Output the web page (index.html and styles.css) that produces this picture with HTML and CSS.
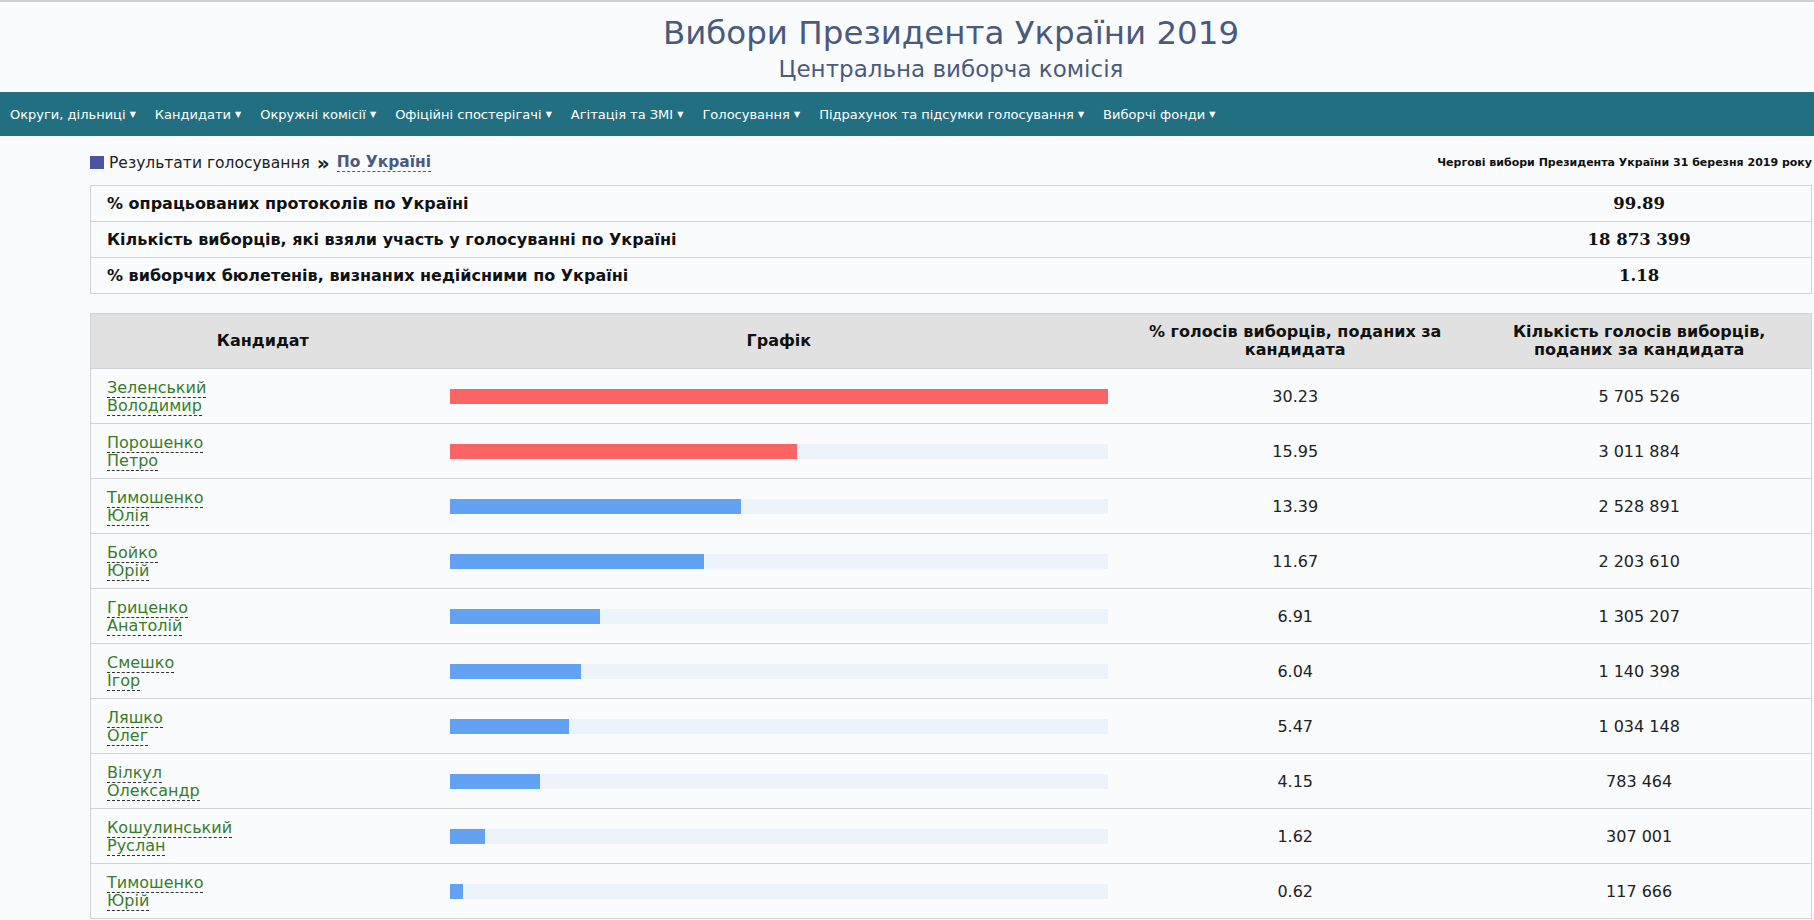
FILE: index.html
```html
<!DOCTYPE html>
<html lang="uk">
<head>
    <meta charset="UTF-8">
    <meta name="viewport" content="width=device-width, initial-scale=1.0">
    <title>Вибори Президента України 2019</title>
    <link rel="stylesheet" href="styles.css">
</head>
<body>
    <header class="site-header">
        <h1 class="site-title">Вибори Президента України 2019</h1>
        <div class="site-subtitle">Центральна виборча комісія</div>
    </header>

    <nav class="main-nav">
        <a class="nav-item" href="#">Округи, дільниці <span class="caret">▼</span></a>
        <a class="nav-item" href="#">Кандидати <span class="caret">▼</span></a>
        <a class="nav-item" href="#">Окружні комісії <span class="caret">▼</span></a>
        <a class="nav-item" href="#">Офіційні спостерігачі <span class="caret">▼</span></a>
        <a class="nav-item" href="#">Агітація та ЗМІ <span class="caret">▼</span></a>
        <a class="nav-item" href="#">Голосування <span class="caret">▼</span></a>
        <a class="nav-item" href="#">Підрахунок та підсумки голосування <span class="caret">▼</span></a>
        <a class="nav-item" href="#">Виборчі фонди <span class="caret">▼</span></a>
    </nav>

    <main class="content">
        <div class="crumbs-row">
            <div class="crumbs">
                <span class="crumb-mark"></span>
                <span>Результати голосування</span>
                <span class="crumb-sep">»</span>
                <a class="crumb-link" href="#">По Україні</a>
            </div>
            <div class="election-date">Чергові вибори Президента України 31 березня 2019 року</div>
        </div>

        <!-- totals -->
        <table class="summary">
            <colgroup>
                <col class="col-wide">
                <col class="col-narrow">
            </colgroup>
            <tr>
                <td class="summary-label">% опрацьованих протоколів по Україні</td>
                <td class="summary-value">99.89</td>
            </tr>
            <tr>
                <td class="summary-label">Кількість виборців, які взяли участь у голосуванні по Україні</td>
                <td class="summary-value">18 873 399</td>
            </tr>
            <tr>
                <td class="summary-label">% виборчих бюлетенів, визнаних недійсними по Україні</td>
                <td class="summary-value">1.18</td>
            </tr>
        </table>

        <!-- candidates -->
        <table class="results">
            <colgroup>
                <col class="col-name">
                <col class="col-chart">
                <col class="col-pct">
                <col class="col-votes">
            </colgroup>
            <thead>
                <tr>
                    <th>Кандидат</th>
                    <th>Графік</th>
                    <th>% голосів виборців, поданих за<br>кандидата</th>
                    <th>Кількість голосів виборців,<br>поданих за кандидата</th>
                </tr>
            </thead>
            <tbody>
                <tr>
                    <td class="cand"><a href="#">Зеленський<br>Володимир</a></td>
                    <td class="chart"><div class="track"><div class="bar bar-lead" style="width: 100%"></div></div></td>
                    <td class="num">30.23</td>
                    <td class="num">5 705 526</td>
                </tr>
                <tr>
                    <td class="cand"><a href="#">Порошенко<br>Петро</a></td>
                    <td class="chart"><div class="track"><div class="bar bar-lead" style="width: 52.76%"></div></div></td>
                    <td class="num">15.95</td>
                    <td class="num">3 011 884</td>
                </tr>
                <tr>
                    <td class="cand"><a href="#">Тимошенко<br>Юлія</a></td>
                    <td class="chart"><div class="track"><div class="bar" style="width: 44.29%"></div></div></td>
                    <td class="num">13.39</td>
                    <td class="num">2 528 891</td>
                </tr>
                <tr>
                    <td class="cand"><a href="#">Бойко<br>Юрій</a></td>
                    <td class="chart"><div class="track"><div class="bar" style="width: 38.6%"></div></div></td>
                    <td class="num">11.67</td>
                    <td class="num">2 203 610</td>
                </tr>
                <tr>
                    <td class="cand"><a href="#">Гриценко<br>Анатолій</a></td>
                    <td class="chart"><div class="track"><div class="bar" style="width: 22.86%"></div></div></td>
                    <td class="num">6.91</td>
                    <td class="num">1 305 207</td>
                </tr>
                <tr>
                    <td class="cand"><a href="#">Смешко<br>Ігор</a></td>
                    <td class="chart"><div class="track"><div class="bar" style="width: 19.98%"></div></div></td>
                    <td class="num">6.04</td>
                    <td class="num">1 140 398</td>
                </tr>
                <tr>
                    <td class="cand"><a href="#">Ляшко<br>Олег</a></td>
                    <td class="chart"><div class="track"><div class="bar" style="width: 18.09%"></div></div></td>
                    <td class="num">5.47</td>
                    <td class="num">1 034 148</td>
                </tr>
                <tr>
                    <td class="cand"><a href="#">Вілкул<br>Олександр</a></td>
                    <td class="chart"><div class="track"><div class="bar" style="width: 13.73%"></div></div></td>
                    <td class="num">4.15</td>
                    <td class="num">783 464</td>
                </tr>
                <tr>
                    <td class="cand"><a href="#">Кошулинський<br>Руслан</a></td>
                    <td class="chart"><div class="track"><div class="bar" style="width: 5.36%"></div></div></td>
                    <td class="num">1.62</td>
                    <td class="num">307 001</td>
                </tr>
                <tr>
                    <td class="cand"><a href="#">Тимошенко<br>Юрій</a></td>
                    <td class="chart"><div class="track"><div class="bar" style="width: 2.05%"></div></div></td>
                    <td class="num">0.62</td>
                    <td class="num">117 666</td>
                </tr>
            </tbody>
        </table>
    </main>
</body>
</html>
```

FILE: styles.css
```css
:root {
    --page-bg: #f9fbfd;
    --title-color: #4a5a7e;
    --nav-bg: #216f80;
    --line: #d0d3d8;
    --head-bg: #e1e1e1;
    --link-green: #3a7b2b;
    --bar-red: #fa6464;
    --bar-blue: #63a2f2;
    --bar-track: #edf3fb;
}

* {
    box-sizing: border-box;
}

body {
    margin: 0;
    background-color: var(--page-bg);
    color: #111;
    font-family: 'DejaVu Sans', Verdana, sans-serif;
    overflow: hidden;
}

/* title block is centred over the content column, not the window */
.site-header {
    height: 92px;
    border-top: 2px solid #d0d0d0;
    padding: 12px 2px 0 90px;
    text-align: center;
    color: var(--title-color);
}

.site-title {
    margin: 0;
    font-weight: normal;
    font-size: 32.5px;
    line-height: 38px;
}

.site-subtitle {
    margin-top: 2px;
    font-size: 23px;
    line-height: 30px;
}

.main-nav {
    height: 44px;
    background-color: var(--nav-bg);
    display: flex;
    align-items: center;
    padding-left: 10px;
    gap: 19px;
}

.nav-item {
    color: #fff;
    text-decoration: none;
    font-size: 13px;
    white-space: nowrap;
}

.caret {
    font-size: 8px;
    vertical-align: 2px;
}

.content {
    margin-left: 90px;
    margin-right: 2px;
}

.crumbs-row {
    display: flex;
    justify-content: space-between;
    align-items: center;
    height: 49px;
    padding-top: 4px;
}

.crumbs {
    display: flex;
    align-items: center;
    gap: 5px;
    font-size: 15.5px;
    color: #222;
}

.crumb-mark {
    width: 14px;
    height: 13px;
    background-color: #4b53a0;
}

.crumb-sep {
    font-weight: bold;
    font-size: 20px;
    line-height: 18px;
    margin: 0 2px;
}

.crumb-link {
    color: #4a5a80;
    font-weight: bold;
    text-decoration: none;
    border-bottom: 1px dashed #4a5a80;
}

.election-date {
    font-size: 11px;
    font-weight: bold;
    color: #111;
}

table {
    width: 100%;
    border-collapse: collapse;
    table-layout: fixed;
    border-left: 1px solid var(--line);
    border-right: 1px solid var(--line);
}

tr {
    border-top: 1px solid var(--line);
    border-bottom: 1px solid var(--line);
}

td, th {
    padding: 0;
}

.col-wide { width: 80%; }
.col-narrow { width: 20%; }

.summary tr {
    height: 36px;
}

.summary-label {
    padding: 0 16px;
    font-weight: bold;
    font-size: 16px;
}

.summary-value {
    text-align: center;
    font-family: 'DejaVu Serif', 'Liberation Serif', serif;
    font-weight: bold;
    font-size: 16.5px;
}

.results {
    margin-top: 19px;
}

.col-name { width: 20%; }
.col-chart { width: 40%; }
.col-pct { width: 20%; }
.col-votes { width: 20%; }

.results th {
    height: 55px;
    background-color: var(--head-bg);
    font-size: 16px;
    line-height: 18px;
    font-weight: bold;
    text-align: center;
}

.results td {
    height: 55px;
}

.cand {
    padding: 1px 16px 0;
    font-size: 16px;
    line-height: 18px;
}

.cand a {
    color: var(--link-green);
    text-decoration: none;
    border-bottom: 1px dashed #333;
}

.chart {
    padding: 0 15px;
}

.track {
    height: 15px;
    background-color: var(--bar-track);
}

.bar {
    height: 100%;
    background-color: var(--bar-blue);
}

.bar-lead {
    background-color: var(--bar-red);
}

.num {
    text-align: center;
    font-size: 16px;
    color: #222;
}
```
